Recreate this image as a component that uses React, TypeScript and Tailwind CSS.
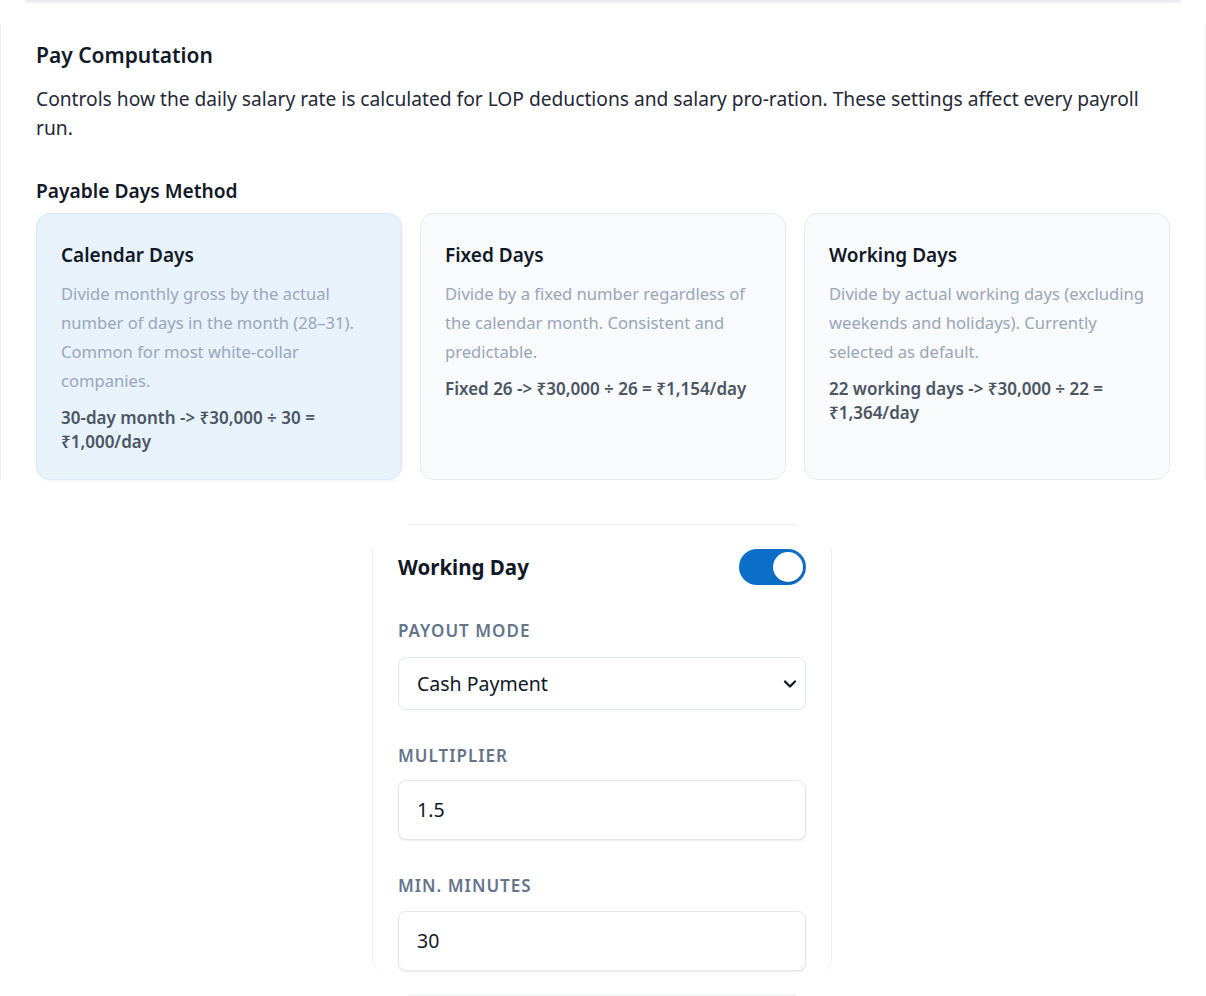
import React from "react";

const font = { fontFamily: '"Noto Sans", "Open Sans", sans-serif' };

function MethodCard({
  title,
  desc,
  formula,
  active,
}: {
  title: string;
  desc: string;
  formula: string;
  active?: boolean;
}) {
  return (
    <div
      className={
        active
          ? "rounded-[14px] border border-[#d9eaf7] bg-[#e7f2fb] px-6 pt-[27px] pb-[25px] shadow-[0_1px_3px_rgba(15,23,42,0.06)]"
          : "rounded-[14px] border border-[#e6eaf0] bg-[#f8fafc] px-6 pt-[27px] pb-[25px]"
      }
    >
      <div className="text-[19px] leading-[28px] font-semibold text-[#111827]">{title}</div>
      <p className="mt-[10px] text-[16.6px] leading-[29px] text-[#9aa6b8]">{desc}</p>
      <p className="mt-[11px] text-[17px] leading-[24px] font-semibold text-[#4b5563]">{formula}</p>
    </div>
  );
}

function Label({ children }: { children: React.ReactNode }) {
  return (
    <div className="text-[17px] leading-[24px] font-semibold uppercase tracking-[0.06em] text-[#64748b]">
      {children}
    </div>
  );
}

export default function App() {
  return (
    <div className="min-h-[996px] w-[1206px] bg-white" style={font}>
      <div className="mx-[25px] h-[2px] rounded-b bg-[#e9edf3] shadow-[0_1px_2px_rgba(15,23,42,0.06)]" />
      <div className="mt-[22px] border-x border-[#eef0f4] pl-[35px] pr-[35px] pt-[16px]">
        <h2 className="text-[21px] leading-[30px] font-semibold text-[#111827]">Pay Computation</h2>
        <p className="mt-[14px] text-[19.2px] leading-[29px] text-[#1f2937]">
          Controls how the daily salary rate is calculated for LOP deductions and salary pro-ration. These settings
          affect every payroll run.
        </p>
        <div className="mt-[35px] text-[19.2px] leading-[28px] font-semibold text-[#111827]">Payable Days Method</div>
        <div className="mt-[8px] grid grid-cols-3 gap-[18px]">
          <MethodCard
            active
            title="Calendar Days"
            desc="Divide monthly gross by the actual number of days in the month (28–31). Common for most white-collar companies."
            formula="30-day month -> ₹30,000 ÷ 30 = ₹1,000/day"
          />
          <MethodCard
            title="Fixed Days"
            desc="Divide by a fixed number regardless of the calendar month. Consistent and predictable."
            formula="Fixed 26 -> ₹30,000 ÷ 26 = ₹1,154/day"
          />
          <MethodCard
            title="Working Days"
            desc="Divide by actual working days (excluding weekends and holidays). Currently selected as default."
            formula="22 working days -> ₹30,000 ÷ 22 = ₹1,364/day"
          />
        </div>
      </div>

      <div className="mt-[44px] h-[1px] w-[388px] bg-[#eceff3]" style={{ marginLeft: 408 }} />

      <div className="ml-[372px] mt-[23px] w-[460px] rounded-b-[12px] border-x border-[#eceef2] px-[25px] pt-[1px]">
        <div className="flex h-[36px] items-center justify-between">
          <div className="text-[20.5px] leading-[30px] font-bold text-[#111827]">Working Day</div>
          <div className="flex h-[36px] w-[67px] items-center justify-end rounded-full bg-[#0b6fc8] pr-[3px]">
            <div className="h-[30px] w-[30px] rounded-full bg-white shadow-[0_1px_2px_rgba(0,0,0,0.2)]" />
          </div>
        </div>

        <div className="mt-[34px]">
          <Label>Payout Mode</Label>
        </div>
        <div className="mt-[14px] flex h-[53px] items-center justify-between rounded-[8px] border border-[#e2e8f0] bg-white pl-[18px] pr-[5px]">
          <span className="text-[19.5px] text-[#111827]">Cash Payment</span>
          <svg width="20" height="20" viewBox="0 0 24 24" fill="none" stroke="#111827" strokeWidth="2.8" strokeLinecap="round" strokeLinejoin="round">
            <path d="m6 9 6 6 6-6" />
          </svg>
        </div>

        <div className="mt-[34px]">
          <Label>Multiplier</Label>
        </div>
        <div className="mt-[12px] flex h-[60px] items-center rounded-[8px] border border-[#e5e7eb] bg-white pl-[18px] shadow-[0_1px_2px_rgba(15,23,42,0.08)]">
          <span className="text-[19.5px] text-[#111827]">1.5</span>
        </div>

        <div className="mt-[34px]">
          <Label>Min. Minutes</Label>
        </div>
        <div className="relative mt-[13px] -mb-[13px] flex h-[60px] items-center rounded-[8px] border border-[#e5e7eb] bg-white pl-[18px] shadow-[0_1px_2px_rgba(15,23,42,0.08)]">
          <span className="text-[19.5px] text-[#111827]">30</span>
        </div>
      </div>

      <div className="mt-[37px] h-[1px] w-[388px] bg-[#eceff3]" style={{ marginLeft: 408 }} />
    </div>
  );
}
